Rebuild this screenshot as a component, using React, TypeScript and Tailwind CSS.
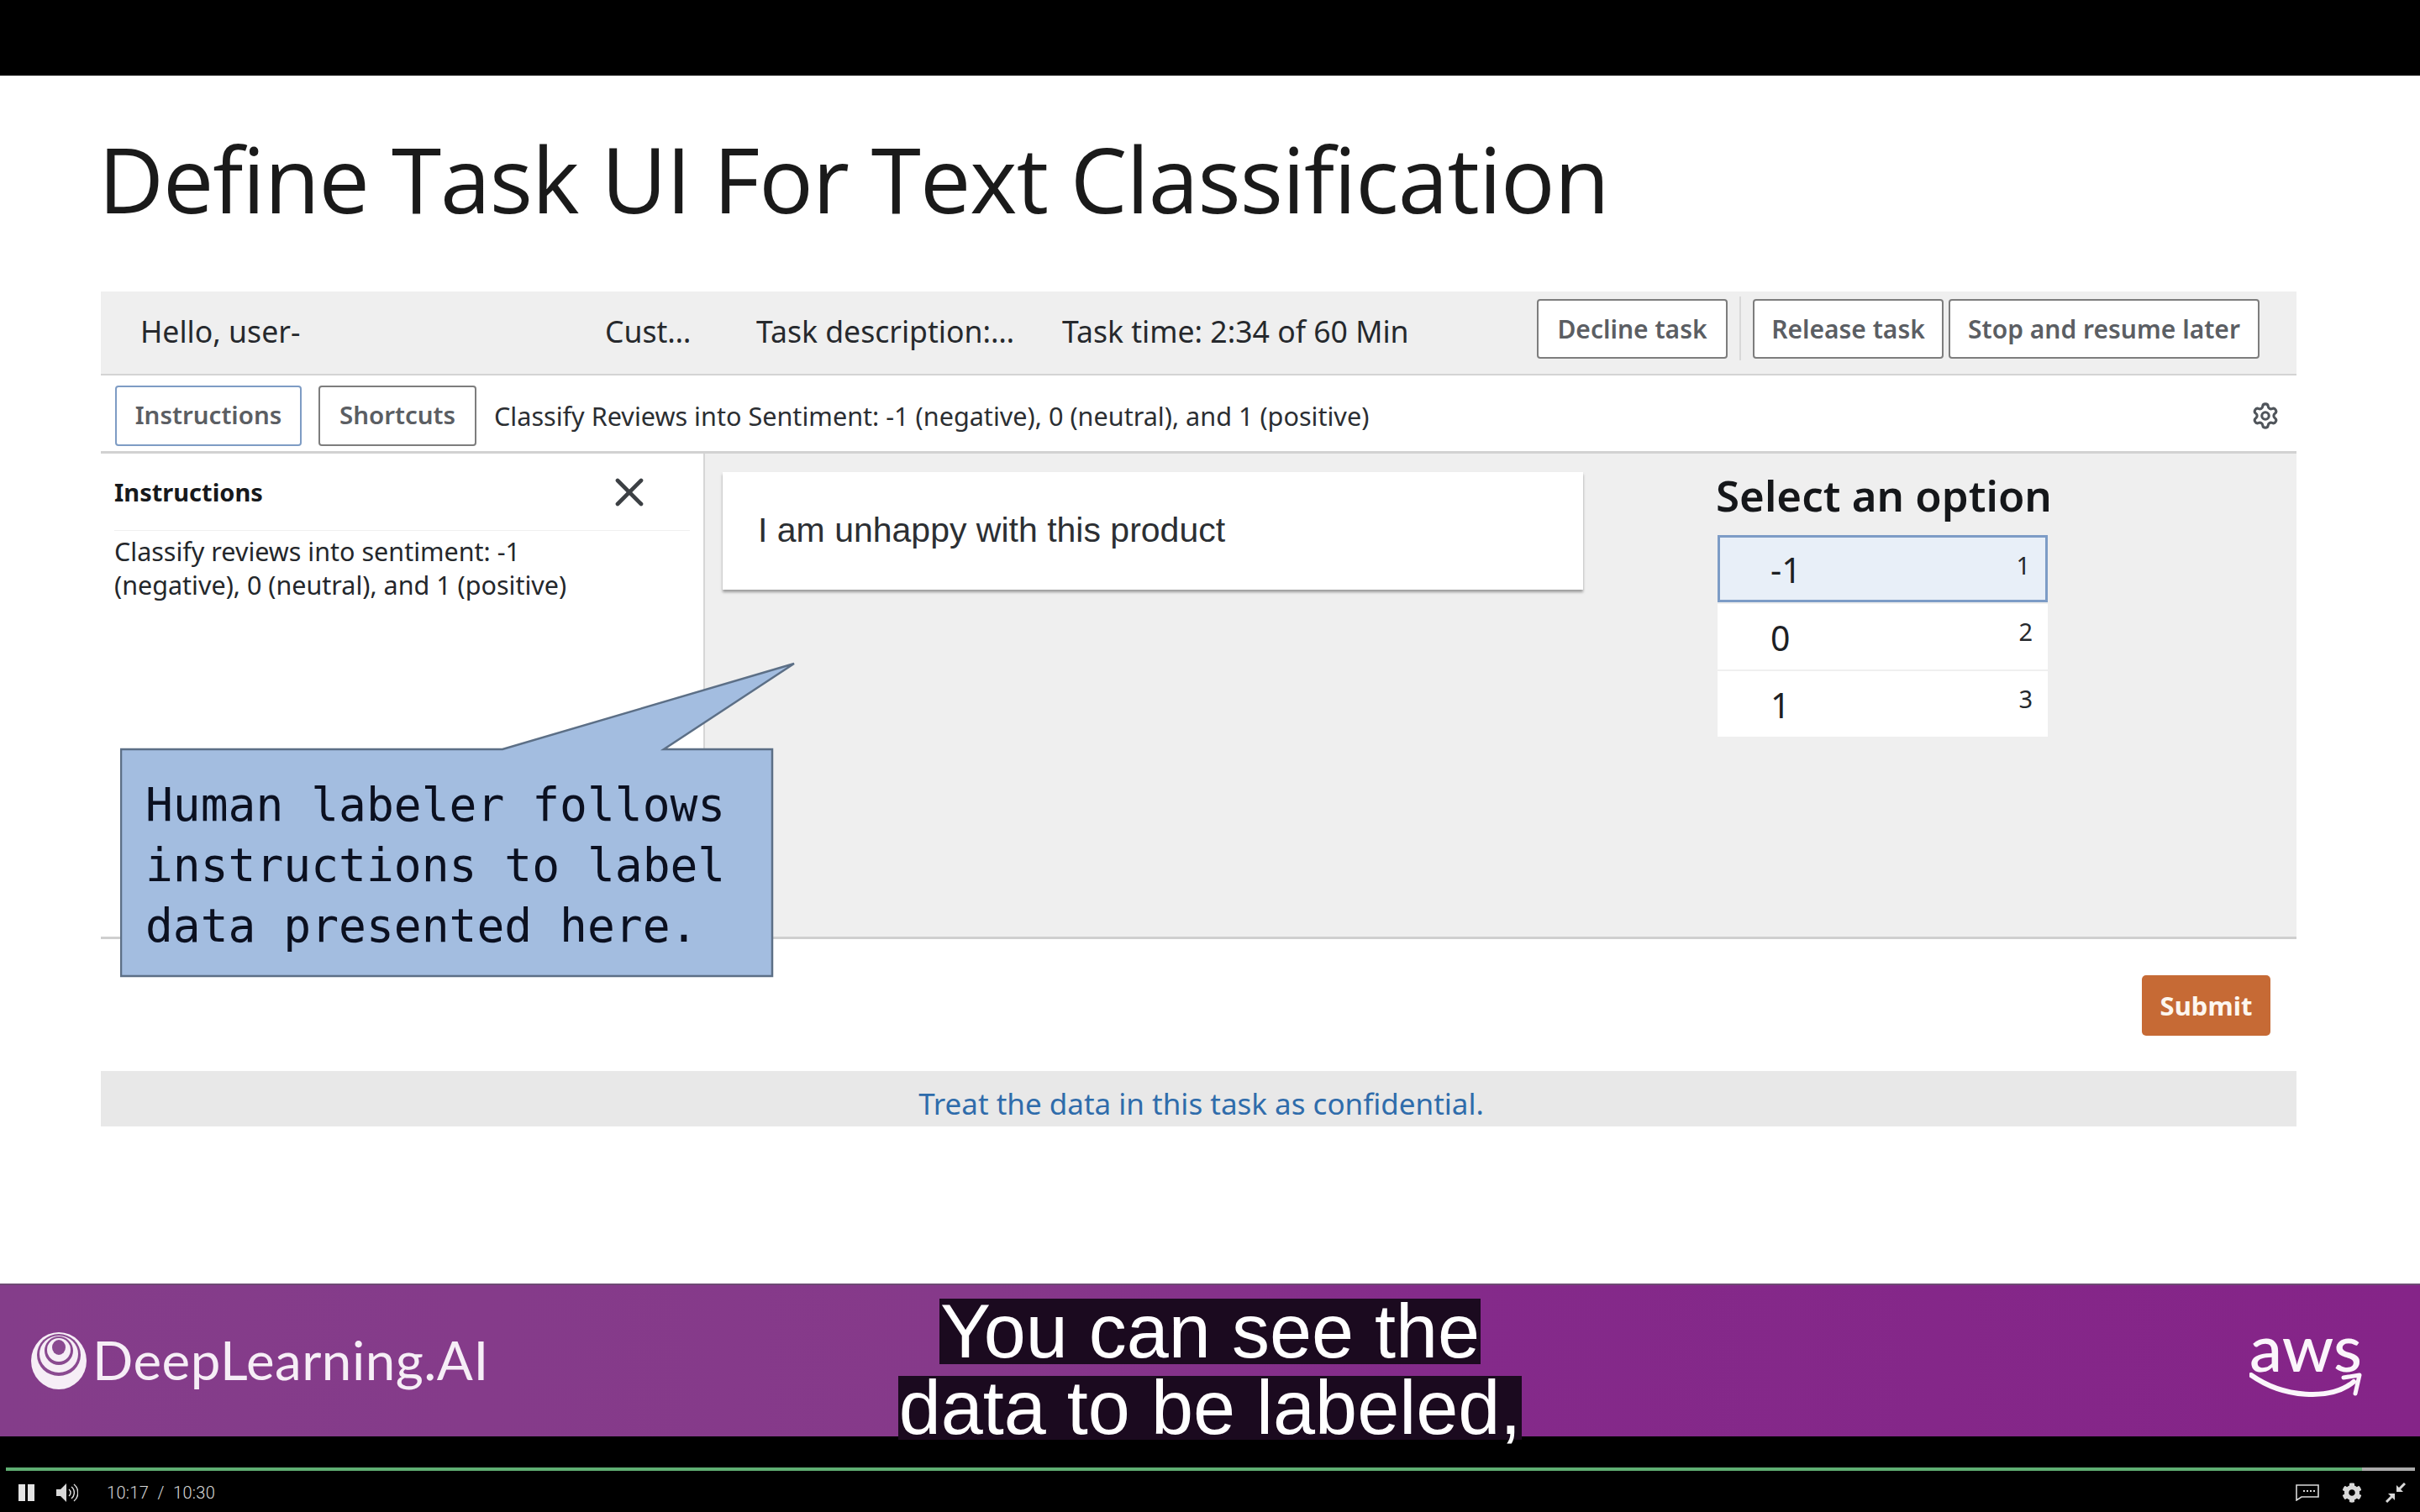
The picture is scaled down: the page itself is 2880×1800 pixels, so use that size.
import { Settings, X } from 'lucide-react';
import { FaCog } from 'react-icons/fa';

const uiFont = "font-['Noto_Sans',sans-serif]";

const options = [
  { label: '-1', key: '1', active: true },
  { label: '0', key: '2', active: false },
  { label: '1', key: '3', active: false },
];

function OutlineButton({ children, width }: { children: React.ReactNode; width: string }) {
  return (
    <button className={`${width} h-[71px] bg-white border-2 border-[#7d7d7d] rounded-[4px] text-[30px] font-semibold text-[#5b5e63] flex items-center justify-center`}>
      {children}
    </button>
  );
}

function Logo() {
  return (
    <svg width="66" height="68" viewBox="0 0 66 68">
      <ellipse cx="33" cy="34" rx="33" ry="34" fill="#f6eef6" />
      <ellipse cx="33" cy="27" rx="26" ry="25" fill="#8a4a90" />
      <ellipse cx="33" cy="26" rx="23" ry="22" fill="#f6eef6" />
      <ellipse cx="33" cy="22" rx="17" ry="17" fill="#8a4a90" />
      <ellipse cx="33" cy="21" rx="14" ry="14" fill="#f6eef6" />
      <ellipse cx="33" cy="18" rx="8" ry="9" fill="#8a4a90" />
    </svg>
  );
}

function Callout() {
  return (
    <div className="absolute left-[23px] top-[441px] w-[804px] h-[376px]">
      <svg width="804" height="376" viewBox="0 0 804 376" className="absolute inset-0">
        <polygon
          points="1,104 455,104 802,2 647,104 776,104 776,374 1,374"
          fill="#a3bde0"
          stroke="#5c6f86"
          strokeWidth="2.5"
        />
      </svg>
      <div className="absolute left-[30px] top-[134px] font-['DejaVu_Sans_Mono',monospace] text-[54.6px] leading-[72px] text-[#0b1020] whitespace-pre">
        {'Human labeler follows\ninstructions to label\ndata presented here.'}
      </div>
    </div>
  );
}

function TaskUi() {
  return (
    <div className={`relative ml-[120px] w-[2613px] ${uiFont}`}>
      {/* Top bar */}
      <div className="h-[100px] bg-[#efefef] border-b-2 border-[#d4d4d4] flex items-center pl-[47px] pr-[44px] text-[35.6px] text-[#26292d]">
        <div className="w-[553px] mb-[3px]">
          <div className="w-[190px] overflow-hidden whitespace-nowrap">Hello, user-1</div>
        </div>
        <div className="w-[180px] mb-[3px]">Cust…</div>
        <div className="w-[364px] mb-[3px]">Task description:…</div>
        <div className="mb-[3px]">Task time: 2:34 of 60 Min</div>
        <div className="ml-auto mb-[10px] flex items-center">
          <OutlineButton width="w-[227px]">Decline task</OutlineButton>
          <div className="w-[2px] h-[76px] bg-[#d8d8d8] mx-[14px]" />
          <OutlineButton width="w-[227px]">Release task</OutlineButton>
          <div className="w-[6px]" />
          <OutlineButton width="w-[370px]">Stop and resume later</OutlineButton>
        </div>
      </div>

      {/* Tabs row */}
      <div className="h-[93px] bg-white border-b-[3px] border-[#d2d2d2] flex items-center pt-[5px] pl-[17px] pr-[20px]">
        <button className="w-[222px] h-[72px] border-2 border-[#7e9cc4] rounded-[4px] text-[29.5px] font-semibold text-[#5b5e63]">
          Instructions
        </button>
        <button className="ml-[20px] w-[188px] h-[72px] border-2 border-[#7d7d7d] rounded-[4px] text-[29.5px] font-semibold text-[#5b5e63]">
          Shortcuts
        </button>
        <div className="ml-[21px] mt-[2px] text-[30.6px] text-[#2b2e32]">
          Classify Reviews into Sentiment: -1 (negative), 0 (neutral), and 1 (positive)
        </div>
        <Settings size={34} strokeWidth={2.2} className="ml-auto text-[#50555b]" />
      </div>

      {/* Work area */}
      <div className="h-[578px] flex border-b-[3px] border-[#cfcfcf]">
        <div className="w-[719px] bg-white border-r-2 border-[#d6d6d6]">
          <div className="h-[92px] mx-[16px] pr-[44px] border-b border-[#f0f0f0] flex items-center justify-between">
            <span className="text-[29px] font-bold text-[#17191c]">Instructions</span>
            <X size={56} strokeWidth={2} className="text-[#3c4044]" />
          </div>
          <p className="mx-[16px] mt-[4px] text-[30.5px] leading-[40px] text-[#24272b] w-[640px]">
            Classify reviews into sentiment: -1 (negative), 0 (neutral), and 1 (positive)
          </p>
        </div>
        <div className="flex-1 bg-[#efefef] flex items-start pl-[21px]">
          <div className="mt-[22px] w-[1024px] h-[140px] bg-white shadow-[0_3px_3px_rgba(0,0,0,0.35)] flex items-center pl-[42px] font-['Liberation_Sans',sans-serif] text-[41px] text-[#2c2f33]">
            I am unhappy with this product
          </div>
          <div className="ml-[158px] mt-[10px] w-[410px]">
            <div className="h-[78px] flex items-center text-[51px] font-semibold text-[#15171a] whitespace-nowrap">
              Select an option
            </div>
            <div className="mt-[9px] w-[393px] ml-[2px] flex flex-col gap-[2px]">
              {options.map((o) => (
                <div
                  key={o.key}
                  className={
                    o.active
                      ? 'relative h-[80px] bg-[#e8eff8] border-[3px] border-[#7d9cc6] flex items-center pl-[60px]'
                      : 'relative h-[78px] bg-white flex items-center pl-[63px]'
                  }
                >
                  <span className="text-[41px] text-[#1d2024] mt-[4px]">{o.label}</span>
                  <span className="absolute right-[18px] top-[11px] text-[29px] text-[#25282c]">{o.key}</span>
                </div>
              ))}
            </div>
          </div>
        </div>
      </div>

      {/* Submit */}
      <div className="h-[157px] bg-white flex justify-end pt-[43px] pr-[31px]">
        <button className="w-[153px] h-[72px] bg-[#c66a35] rounded-[5px] text-[31px] font-bold text-[#fdf6ef]">
          Submit
        </button>
      </div>

      {/* Footer note */}
      <div className="h-[66px] bg-[#e8e8e8] flex items-center justify-center pt-[13px] pl-[6px] text-[35px] text-[#2f6cab]">
        Treat the data in this task as confidential.
      </div>

      <Callout />
    </div>
  );
}

function BrandBand() {
  return (
    <div className="relative h-[182px] border-t-2 border-[#6f4a74] bg-[linear-gradient(90deg,#843d8a_0%,#86398a_40%,#842a8a_60%,#852488_100%)] flex items-center justify-between">
      <div className="flex items-center pl-[37px]">
        <Logo />
        <span className="ml-[7px] font-['Lato',sans-serif] text-[63.7px] leading-none text-[#f6eef6] tracking-[0.5px] mb-[3px]">
          DeepLearning.AI
        </span>
      </div>
      <div className="flex flex-col items-center pr-[69px] pt-[4px]">
        <span className="font-['Lato',sans-serif] font-medium text-[78px] leading-[50px] text-[#fbf5fb] h-[50px]">aws</span>
        <svg width="134" height="32" viewBox="0 0 134 32" className="mt-[6px]">
          <path d="M2 3C40 30 96 34 124 11" fill="none" stroke="#fbf5fb" strokeWidth="6" strokeLinecap="round" />
          <path d="M112 6 L131 3 L126 25" fill="none" stroke="#fbf5fb" strokeWidth="5" strokeLinecap="round" strokeLinejoin="round" />
        </svg>
      </div>
      {/* Caption sits over the band */}
      <div className="absolute left-0 right-0 top-[16px] flex flex-col items-center font-['Liberation_Sans',sans-serif] text-[90px] text-white">
        <span className="bg-[#1b0a1f] px-[1px] h-[78px] leading-[78px]">You can see the</span>
        <span className="mt-[14px] bg-[#1b0a1f] px-[1px] h-[76px] leading-[76px]">data to be labeled,</span>
      </div>
    </div>
  );
}

function PlayerBar() {
  return (
    <div className="h-[90px] bg-black pt-[37px] px-[6px]">
      <div className="h-[4px] ml-[1px] w-[2867px] bg-[#aaaaaa]">
        <div className="h-full w-[2804px] bg-[#5fae72]" />
      </div>
      <div className="mt-[11px] flex items-center pl-[16px] pr-[11px] text-[#d9d9d9]">
        <svg width="20" height="20" viewBox="0 0 20 20">
          <rect x="0" y="0" width="8" height="20" fill="#e4e4e4" />
          <rect x="11" y="0" width="8" height="20" fill="#e4e4e4" />
        </svg>
        <svg width="26" height="24" viewBox="0 0 26 24" className="ml-[25px]">
          <path d="M0 8h5l7-7v22l-7-7H0z" fill="#d9d9d9" />
          <path d="M15 8a5 5 0 0 1 0 8M18 5a9 9 0 0 1 0 14M21 2a13 13 0 0 1 0 20" fill="none" stroke="#d9d9d9" strokeWidth="1.5" />
        </svg>
        <span className="ml-[34px] font-['Roboto',sans-serif] font-light text-[20px] tracking-[0.3px] whitespace-pre">
          10:17  /  10:30
        </span>
        <svg width="28" height="20" viewBox="0 0 28 20" className="ml-auto">
          <path d="M1 1h26v14H7l-6 4z" fill="none" stroke="#d9d9d9" strokeWidth="1.6" />
          <path d="M9 8h2M13 8h2M17 8h2M21 8h2" stroke="#d9d9d9" strokeWidth="2" />
        </svg>
        <FaCog size={24} className="ml-[27px] text-[#d9d9d9]" />
        <svg width="24" height="24" viewBox="0 0 24 24" className="ml-[28px]">
          <path d="M1 23l7-7M23 1l-7 7" stroke="#d9d9d9" strokeWidth="3" />
          <path d="M3 13h8v8zM21 11h-8V3z" fill="#d9d9d9" />
        </svg>
      </div>
    </div>
  );
}

export default function App() {
  return (
    <div className="w-[2880px] h-[1800px] flex flex-col bg-black overflow-hidden">
      <div className="h-[90px] bg-black" />
      <div className="h-[1438px] bg-white">
        <div className="h-[257px] pl-[117px] pb-[11px] flex items-center font-['Open_Sans',sans-serif] font-medium text-[107.5px] text-[#1a1a1a] tracking-[-1px]">
          Define Task UI For Text Classification
        </div>
        <TaskUi />
      </div>
      <BrandBand />
      <PlayerBar />
    </div>
  );
}
